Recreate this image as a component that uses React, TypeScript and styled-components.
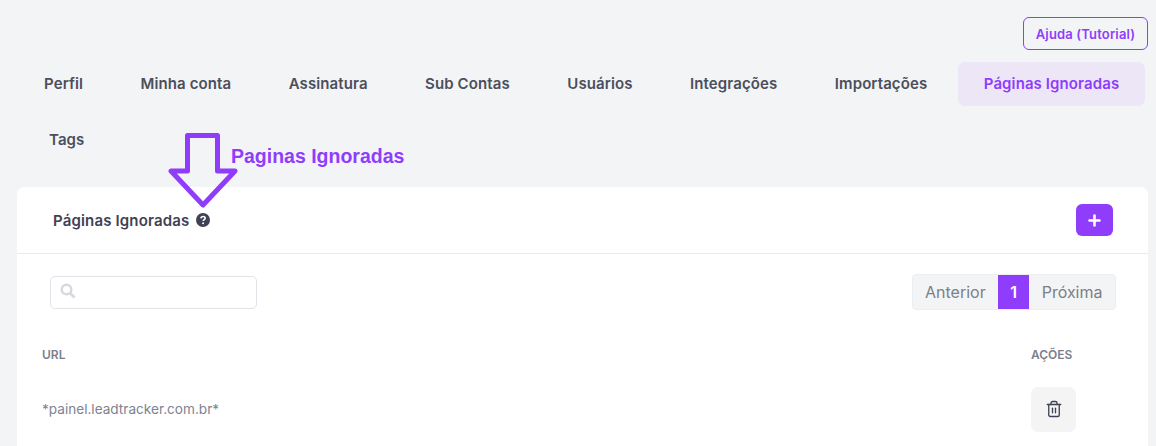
import styled, { createGlobalStyle } from "styled-components";
import { Plus, Trash2 } from "lucide-react";

const tabs = [
  "Perfil",
  "Minha conta",
  "Assinatura",
  "Sub Contas",
  "Usuários",
  "Integrações",
  "Importações",
  "Páginas Ignoradas",
];

const GlobalStyle = createGlobalStyle`
  html, body {
    margin: 0;
    height: 446px;
    overflow: hidden;
    background: #f3f4f6;
    font-family: "Inter", "Noto Sans", sans-serif;
  }
`;

const App = () => {
  return (
    <Page>
      <GlobalStyle />
      <TopBar>
        <HelpButton>Ajuda (Tutorial)</HelpButton>
      </TopBar>
      <Tabs>
        {tabs.map((tab) => (
          <Tab key={tab} $active={tab === "Páginas Ignoradas"}>
            {tab}
          </Tab>
        ))}
        <LastTab>Tags</LastTab>
      </Tabs>

      <Annotation>
        <svg width="70" height="78" viewBox="0 0 70 78" fill="none">
          <path
            d="M19.5 3.5H49.5V39H67L35 73L3 39H19.5Z"
            stroke="#8f3dfb"
            strokeWidth="5"
            strokeLinejoin="round"
          />
        </svg>
        <AnnotationText>Paginas Ignoradas</AnnotationText>
      </Annotation>

      <Card>
        <CardHeader>
          <CardTitle>
            Páginas Ignoradas
            <svg width="14" height="14" viewBox="0 0 14 14">
              <circle cx="7" cy="7" r="7" fill="#3f4254" />
              <path
                d="M4.9 5.4C5 4.2 5.9 3.5 7.1 3.5C8.3 3.5 9.2 4.3 9.2 5.3C9.2 6.6 7.2 6.7 7.2 8.1"
                stroke="#fff"
                strokeWidth="1.6"
                fill="none"
              />
              <circle cx="7.1" cy="10.3" r="1" fill="#fff" />
            </svg>
          </CardTitle>
          <AddButton>
            <Plus size={17} strokeWidth={3.6} color="#fff" />
          </AddButton>
        </CardHeader>

        <Toolbar>
          <SearchBox>
            <svg width="16" height="16" viewBox="0 0 16 16" fill="none">
              <circle cx="6.5" cy="6.5" r="4.8" stroke="#d5d8dd" strokeWidth="2.4" />
              <path d="M10.2 10.2L14.5 14.5" stroke="#d5d8dd" strokeWidth="2.8" />
            </svg>
          </SearchBox>
          <Pagination>
            <PageLink>Anterior</PageLink>
            <PageLink $current>1</PageLink>
            <PageLink>Próxima</PageLink>
          </Pagination>
        </Toolbar>

        <Table>
          <HeadRow>
            <HeadCell>URL</HeadCell>
            <HeadCell>AÇÕES</HeadCell>
          </HeadRow>
          <BodyRow>
            <UrlCell>*painel.leadtracker.com.br*</UrlCell>
            <ActionCell>
              <DeleteButton>
                <Trash2 size={18} strokeWidth={1.8} color="#3f4254" />
              </DeleteButton>
            </ActionCell>
          </BodyRow>
        </Table>
      </Card>
    </Page>
  );
};

const Page = styled.div`
  position: relative;
  width: 1156px;
  height: 446px;
  overflow: hidden;
  box-sizing: border-box;
  padding: 17px 8px 0 17px;
`;

const TopBar = styled.div`
  display: flex;
  justify-content: flex-end;
  height: 45px;
`;

const HelpButton = styled.button`
  width: 125px;
  height: 33px;
  padding: 0;
  background: transparent;
  border: 1px solid #8f3dfb;
  border-radius: 6px;
  color: #8f3dfb;
  font-family: inherit;
  font-size: 13px;
  font-weight: 600;
  letter-spacing: 0.15px;
`;

const Tabs = styled.div`
  display: flex;
  flex-wrap: wrap;
  gap: 12px 3.5px;
  margin-bottom: 25px;
`;

const Tab = styled.div<{ $active?: boolean }>`
  display: flex;
  align-items: center;
  box-sizing: border-box;
  height: 44px;
  padding: 0 ${(props) => (props.$active ? "26px" : "27px")} 1px;
  border-radius: 7px;
  font-size: 15px;
  font-weight: 600;
  letter-spacing: 0.1px;
  white-space: nowrap;
  color: ${(props) => (props.$active ? "#8f3dfb" : "#4b4f5c")};
  background: ${(props) => (props.$active ? "#ece6f7" : "transparent")};
`;

const LastTab = styled(Tab)`
  padding-left: 32px;
`;

const Annotation = styled.div`
  position: absolute;
  left: 168px;
  top: 132px;
  display: flex;
`;

const AnnotationText = styled.span`
  margin: 13px 0 0 -7px;
  font-family: "Liberation Sans", Arial, sans-serif;
  font-size: 19.5px;
  font-weight: 700;
  line-height: 22px;
  color: #8f3dfb;
  white-space: nowrap;
`;

const Card = styled.div`
  width: 1131px;
  height: 300px;
  background: #fff;
  border-radius: 7px;
`;

const CardHeader = styled.div`
  display: flex;
  align-items: center;
  justify-content: space-between;
  height: 66px;
  padding: 0 35px 0 36px;
  border-bottom: 1px solid #e9eaee;
`;

const CardTitle = styled.div`
  display: flex;
  align-items: center;
  gap: 7px;
  font-size: 15px;
  font-weight: 600;
  letter-spacing: 0.15px;
  color: #3f4254;
`;

const AddButton = styled.button`
  display: flex;
  align-items: center;
  justify-content: center;
  width: 37px;
  height: 32px;
  padding: 0;
  border: 0;
  border-radius: 6px;
  background: #8f3dfb;
`;

const Toolbar = styled.div`
  display: flex;
  align-items: flex-start;
  justify-content: space-between;
  padding: 20px 32px 0 33px;
`;

const SearchBox = styled.div`
  box-sizing: border-box;
  width: 207px;
  height: 33px;
  margin-top: 2px;
  padding: 6px 9px;
  border: 1px solid #e1e3e8;
  border-radius: 5px;
`;

const Pagination = styled.div`
  display: flex;
  height: 36px;
  overflow: hidden;
  box-sizing: border-box;
  border: 1px solid #eceef1;
  border-radius: 4px;
  background: #f3f4f6;
`;

const PageLink = styled.div<{ $current?: boolean }>`
  display: flex;
  align-items: center;
  justify-content: center;
  width: ${(props) => (props.$current ? "31px" : "auto")};
  padding: 0 ${(props) => (props.$current ? "0" : "12.5px")};
  font-size: 16px;
  font-weight: ${(props) => (props.$current ? 600 : 400)};
  color: ${(props) => (props.$current ? "#fff" : "#7b7f88")};
  background: ${(props) => (props.$current ? "#8f3dfb" : "transparent")};
`;

const Table = styled.div`
  padding: 0 25px;
`;

const HeadRow = styled.div`
  display: flex;
  justify-content: space-between;
  align-items: center;
  height: 44px;
  margin-top: 22px;
`;

const HeadCell = styled.div`
  width: 92px;
  font-size: 12px;
  font-weight: 600;
  color: #7b7f8c;
  &:first-child {
    width: auto;
  }
`;

const BodyRow = styled.div`
  display: flex;
  justify-content: space-between;
  align-items: center;
  height: 66px;
`;

const UrlCell = styled.div`
  font-size: 13.6px;
  color: #7e8290;
`;

const ActionCell = styled.div`
  width: 92px;
`;

const DeleteButton = styled.button`
  display: flex;
  align-items: center;
  justify-content: center;
  width: 45px;
  height: 45px;
  padding: 0;
  border: 0;
  border-radius: 7px;
  background: #f4f4f5;
`;

export default App;
